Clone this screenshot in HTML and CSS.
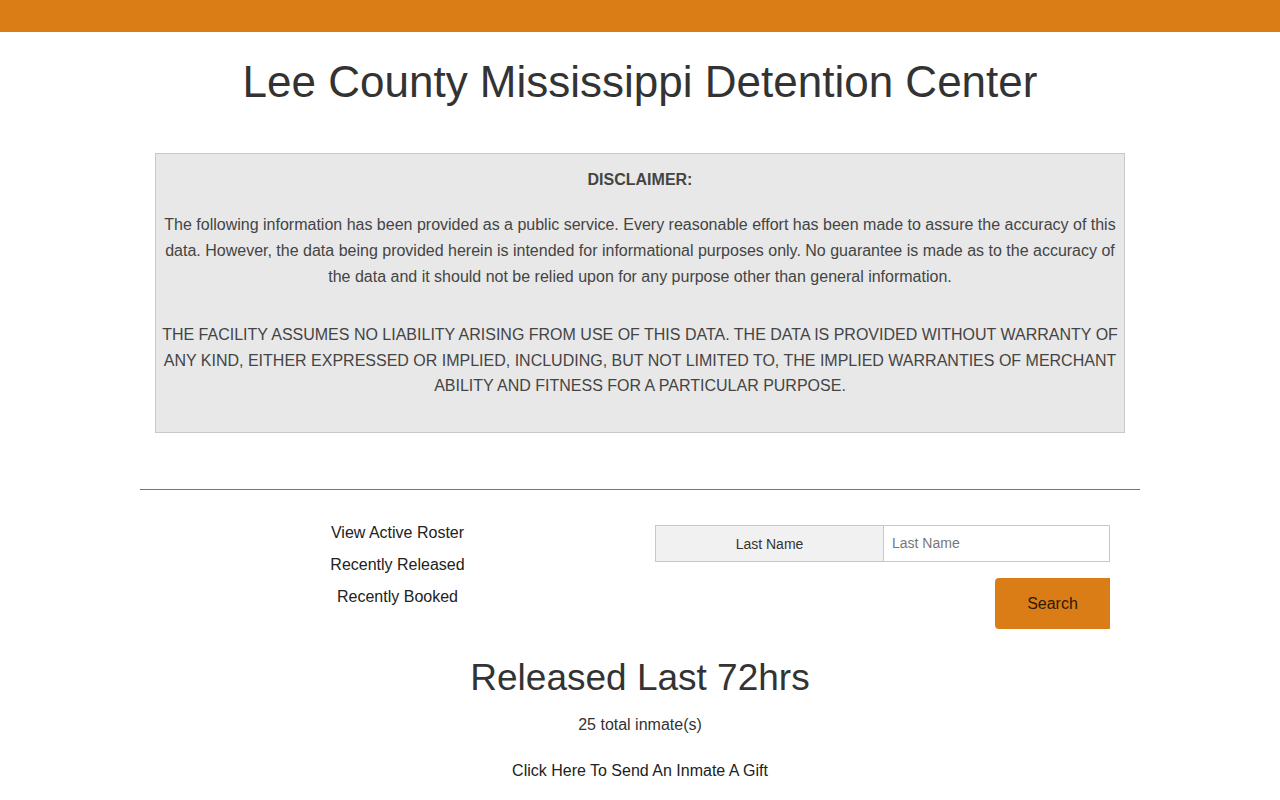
FILE: index.html
```
<!DOCTYPE html>
<html>
<head>
<meta charset="utf-8">
<link rel="stylesheet" href="styles.css">
</head>
<body>
<div class="topbar"></div>
<div class="container">
  <h1 class="title">Lee County Mississippi Detention Center</h1>
  <div class="disclaimer">
    <p class="disc-head">DISCLAIMER:</p>
    <p>The following information has been provided as a public service. Every reasonable effort has been made to assure the accuracy of this data. However, the data being provided herein is intended for informational purposes only. No guarantee is made as to the accuracy of the data and it should not be relied upon for any purpose other than general information.</p>
    <p class="caps">THE FACILITY ASSUMES NO LIABILITY ARISING FROM USE OF THIS DATA. THE DATA IS PROVIDED WITHOUT WARRANTY OF ANY KIND, EITHER EXPRESSED OR IMPLIED, INCLUDING, BUT NOT LIMITED TO, THE IMPLIED WARRANTIES OF MERCHANT ABILITY AND FITNESS FOR A PARTICULAR PURPOSE.</p>
  </div>
</div>
<div class="wide">
  <div class="rule"></div>
</div>
<div class="container">
  <div class="row">
    <div class="col links">
      <a href="#">View Active Roster</a>
      <a href="#">Recently Released</a>
      <a href="#">Recently Booked</a>
    </div>
    <div class="col search">
      <div class="input-group">
        <span class="addon">Last Name</span>
        <input type="text" class="field" placeholder="Last Name">
      </div>
      <div class="btn-row">
        <button class="btn">Search</button>
      </div>
    </div>
  </div>
  <h2 class="subtitle">Released Last 72hrs</h2>
  <p class="count">25 total inmate(s)</p>
  <p class="gift"><a href="#">Click Here To Send An Inmate A Gift</a></p>
</div>
</body>
</html>
```
FILE: styles.css
```
* { box-sizing: border-box; }
html, body { margin: 0; padding: 0; background: #fff; }
body {
  font-family: "Liberation Sans", Arial, sans-serif;
  font-size: 16px;
  color: #333;
}
.topbar { height: 32px; background: #db7d17; }
.container { width: 970px; margin: 0 auto; }
.wide { width: 1000px; margin: 0 auto; }
.title {
  margin: 24px 0 0;
  text-align: center;
  font-weight: normal;
  font-size: 44px;
  line-height: 52px;
  color: #333;
}
.disclaimer {
  margin-top: 45px;
  background: #e8e8e8;
  border: 1px solid #c8c8c8;
  padding: 13px 6px 33px;
  text-align: center;
  color: #444;
  line-height: 26px;
}
.disclaimer p { margin: 0 0 19px; }
.disclaimer .disc-head { font-weight: bold; margin-bottom: 19px; }
.disclaimer .caps { margin: 32px 0 0; line-height: 25.5px; }
.rule {
  margin-top: 56px;
  height: 1px;
  background: #9a7426;
}
.row { display: flex; margin-top: 27px; }
.col { flex: 1; padding: 0 15px; }
.links { display: flex; flex-direction: column; align-items: center; }
.links a { color: #222; text-decoration: none; line-height: 32px; }
.search { padding-top: 8px; }
.input-group { display: flex; height: 37px; }
.addon {
  width: 228px;
  background: #f1f1f1;
  border: 1px solid #c8c8c8;
  border-right: 0;
  display: flex; align-items: center; justify-content: center;
  font-size: 14px;
  color: #333;
  padding-top: 2px;
}
.field {
  flex: 1;
  border: 1px solid #c8c8c8;
  font-family: "Liberation Sans", Arial, sans-serif;
  font-size: 14px;
  padding: 0 8px;
  color: #333;
  outline: none;
}
.field::placeholder { color: #777; }
.btn-row { display: flex; justify-content: flex-end; margin-top: 16px; }
.btn {
  width: 115px; height: 51px;
  background: #db7d17;
  border: 0;
  border-radius: 4px 0 0 4px;
  font-family: "Liberation Sans", Arial, sans-serif;
  font-size: 16px;
  color: #2a1a08;
  padding-top: 2px;
}
.subtitle {
  margin: 27px 0 0;
  text-align: center;
  font-weight: normal;
  font-size: 37px;
  line-height: 44px;
  color: #333;
}
.count { margin: 14px 0 0; text-align: center; line-height: 22px; }
.gift { margin: 24px 0 0; text-align: center; line-height: 22px; }
.gift a { color: #222; text-decoration: none; }
```
